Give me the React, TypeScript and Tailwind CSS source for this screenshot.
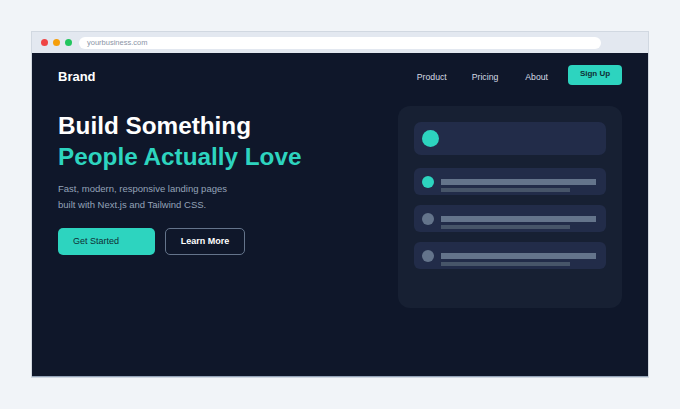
import React from 'react';

const font = { fontFamily: '"Liberation Sans", Arial, sans-serif' };

const rows = [
    { id: 'row-1', active: true },
    { id: 'row-2', active: false },
    { id: 'row-3', active: false },
];

const BrowserBar = () => (
    <div className="flex h-[21px] items-center bg-[#e3e8f0] pl-[9px] pr-[47px]">
        <div className="flex gap-[5px]">
            <span className="h-[7px] w-[7px] rounded-full bg-[#ef4444]" />
            <span className="h-[7px] w-[7px] rounded-full bg-[#f59e0b]" />
            <span className="h-[7px] w-[7px] rounded-full bg-[#22c55e]" />
        </div>
        <div className="ml-[7px] flex h-[12px] flex-1 items-center rounded-full bg-white pl-[8px] text-[7.5px] text-[#8a94a6]">
            yourbusiness.com
        </div>
    </div>
);

const Preview = () => (
    <div className="flex h-[202px] w-[224px] flex-col rounded-[12px] bg-[#172033] p-4">
        <div className="flex h-[33px] items-center rounded-[7px] bg-[#222c49] pl-2">
            <span className="h-[17px] w-[17px] rounded-full bg-[#2dd4bf]" />
        </div>
        <div className="mt-[13px] flex flex-col gap-[10px]">
            {rows.map((row) => (
                <div key={row.id} className="flex h-[27px] items-start gap-[7px] rounded-[6px] bg-[#222c49] pl-2 pr-[10px] pt-2">
                    <span className={`h-[12px] w-[12px] shrink-0 rounded-full ${row.active ? 'bg-[#2dd4bf]' : 'bg-[#64748b]'}`} />
                    <div className="mt-[3px] flex flex-1 flex-col gap-[3px]">
                        <div className="h-[6px] w-full bg-[#64748b]" />
                        <div className="h-[4px] w-[129px] bg-[#475569]" />
                    </div>
                </div>
            ))}
        </div>
    </div>
);

export default function App() {
    return (
        <div className="h-[409px] w-[680px] bg-[#f1f4f8] pl-[32px] pt-[32px]" style={font}>
            <div className="w-[616px] overflow-hidden shadow-[0_0_0_1px_rgba(148,163,184,0.35)]">
                <BrowserBar />
                <div className="h-[324px] border-b border-[#94a3b8] bg-[#0f172a] px-[26px]">
                    {/* Nav */}
                    <nav className="flex h-[44px] items-center">
                        <span className="mt-[3px] text-[13px] font-bold leading-[16px] text-white">Brand</span>
                        <div className="ml-auto mt-[3px] flex items-center text-[8.7px] leading-[12px] text-[#d5dbe4]">
                            <span>Product</span>
                            <span className="ml-[25px]">Pricing</span>
                            <span className="ml-[27px]">About</span>
                        </div>
                        <button className="ml-[20px] h-[20px] w-[54px] rounded-[4px] bg-[#2dd4bf] pb-[2px] text-[8px] font-bold text-[#0f2f35]">
                            Sign Up
                        </button>
                    </nav>

                    {/* Hero */}
                    <div className="mt-[9px] flex items-start justify-between">
                        <div className="pt-1">
                            <h1 className="text-[24.3px] font-bold leading-[31px] text-white">
                                Build Something
                                <br />
                                <span className="text-[#2dd4bf]">People Actually Love</span>
                            </h1>
                            <p className="mt-[9px] text-[9.5px] leading-[16px] text-[#94a3b8]">
                                Fast, modern, responsive landing pages
                                <br />
                                built with Next.js and Tailwind CSS.
                            </p>
                            <div className="mt-[15px] flex gap-[10px]">
                                <button className="h-[27px] w-[97px] rounded-[5px] bg-[#2dd4bf] pl-[15px] text-left text-[9px] text-[#0f2f35]">
                                    Get Started
                                </button>
                                <button className="h-[27px] w-[80px] rounded-[5px] border border-[#64748b] text-[9px] font-bold text-white">
                                    Learn More
                                </button>
                            </div>
                        </div>
                        <Preview />
                    </div>
                </div>
            </div>
        </div>
    );
}
